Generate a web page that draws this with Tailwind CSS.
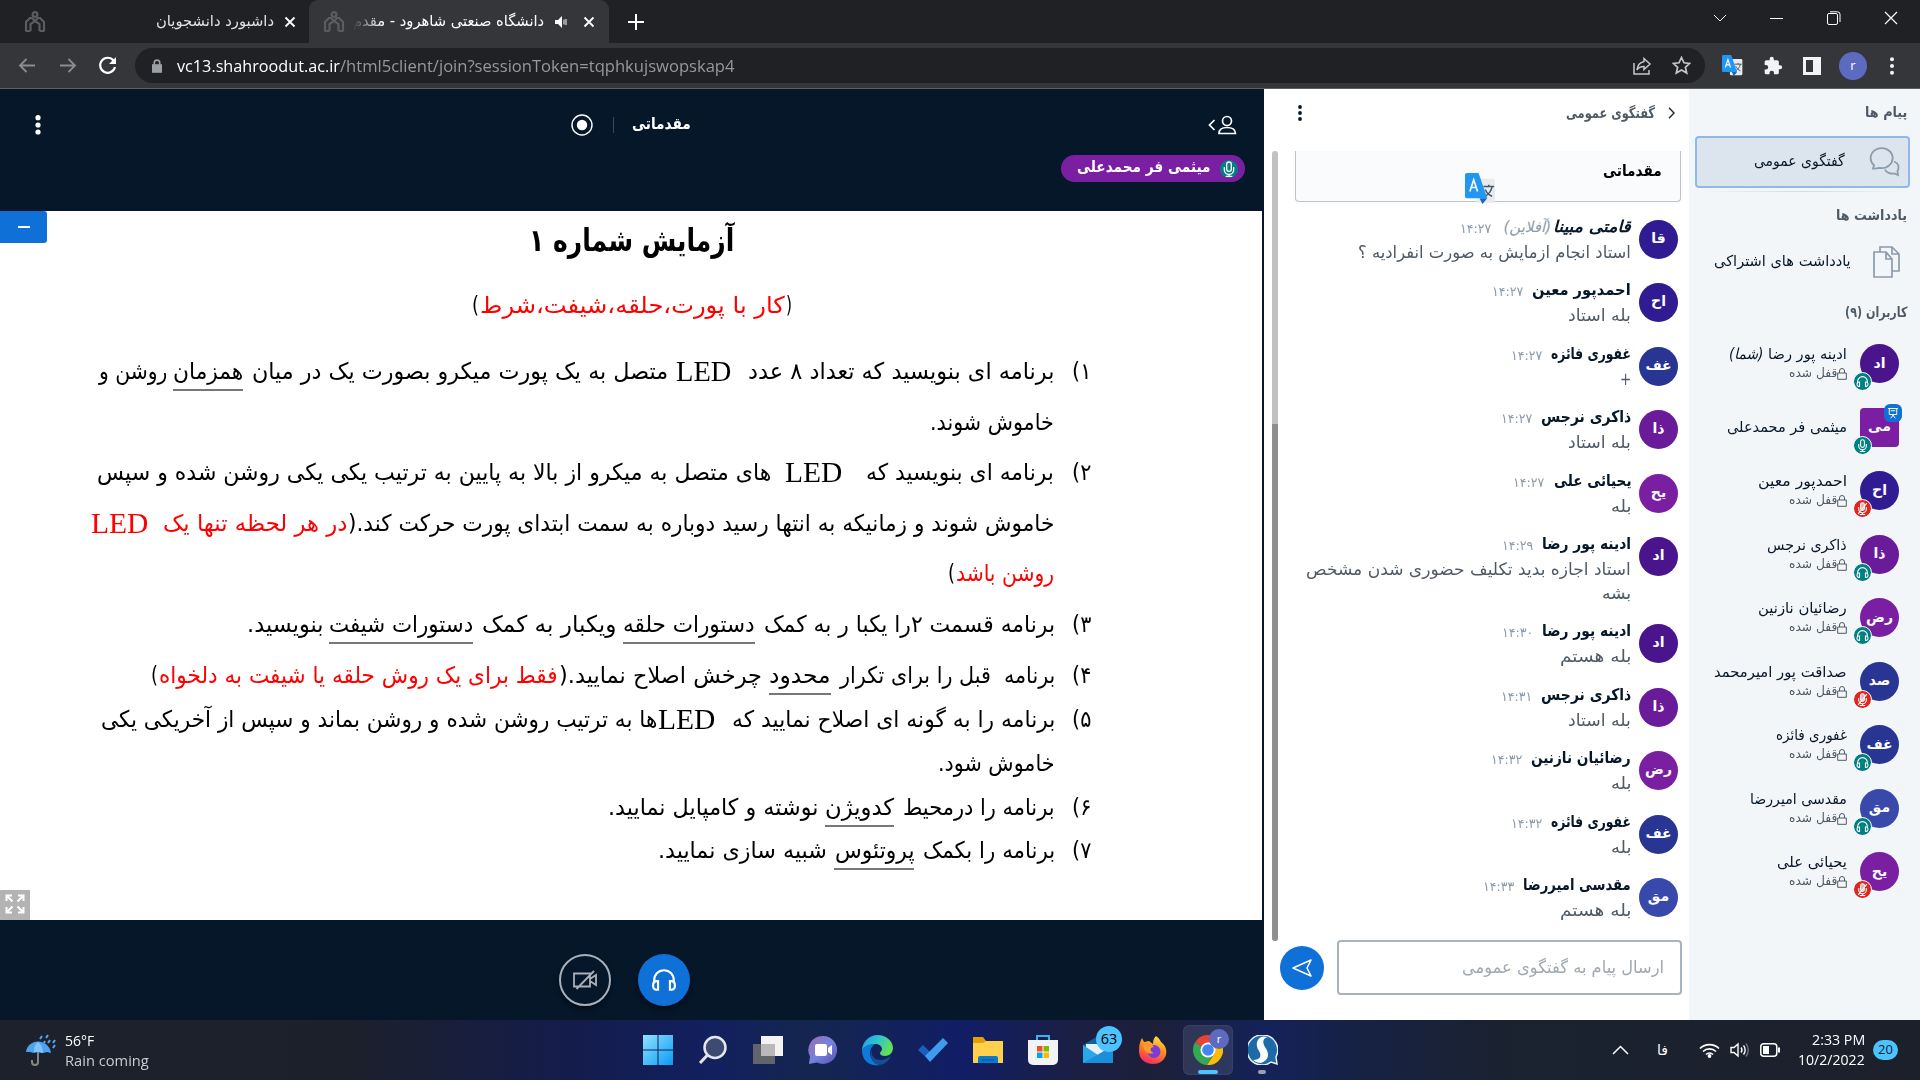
<!DOCTYPE html>
<html lang="fa">
<head>
<meta charset="utf-8">
<title>دانشگاه صنعتی شاهرود - مقدماتی</title>
<script src="https://cdn.jsdelivr.net/npm/@tailwindcss/browser@4"></script>
</head>
<body class="w-[1920px] h-[1080px] overflow-hidden bg-[#06172A] font-['DejaVu_Sans',sans-serif]">
<svg class="hidden">
  <symbol id="uni" viewBox="0 0 22 22"><g fill="none" stroke="#5b5c5f" stroke-width="2.200"><path d="M2 20v-9l4-4M20 20v-9l-4-4M6.500 20v-7l4.500-3 4.500 3v7M1.500 20h5M15.500 20h5M5 7h3l3 3 3-3h3"/><circle cx="11" cy="3.500" r="2.400"/></g></symbol>
  <symbol id="x" viewBox="0 0 12 12"><path d="M1.500 1.500l9 9M10.500 1.500l-9 9" stroke="currentColor" stroke-width="1.800" fill="none"/></symbol>
  <symbol id="tr" viewBox="0 0 32 32"><rect x="12" y="6" width="19" height="25" rx="2" fill="#e8eaed"/><path d="M19 14h11M24.500 12v2M28 14c-1 5-4 8-7 10M21 17c1 3 4 6 7 7" stroke="#455a64" stroke-width="1.500" fill="none"/><path d="M15 26h8l-5 6z" fill="#1565c0"/><path d="M2 0h12l9 26H2a2 2 0 0 1-2-2V2a2 2 0 0 1 2-2z" fill="#2196f3"/><path d="M5 19l4-12 4 12M6.500 15h5" stroke="#fff" stroke-width="1.700" fill="none"/></symbol>
  <symbol id="head" viewBox="0 0 24 24"><path d="M3 15v-3a9 9 0 0 1 18 0v3" fill="none" stroke="currentColor" stroke-width="2"/><path d="M6.500 13v8H5a3 3 0 0 1-3-3v-2a3 3 0 0 1 3-3zM17.500 13v8H19a3 3 0 0 0 3-3v-2a3 3 0 0 0-3-3z" fill="none" stroke="currentColor" stroke-width="2"/></symbol>
  <symbol id="mic" viewBox="0 0 24 24"><g fill="none" stroke="currentColor" stroke-width="2"><rect x="8.500" y="1.500" width="7" height="14" rx="3.500"/><path d="M5 9v4a7 7 0 0 0 14 0V9M12 20v3M7 23h10"/></g></symbol>
  <symbol id="mute" viewBox="0 0 24 24"><g fill="none" stroke="currentColor" stroke-width="2"><rect x="8.500" y="1.500" width="7" height="14" rx="3.500" fill="currentColor" fill-opacity=".6"/><path d="M5 9v4a7 7 0 0 0 14 0V9M12 20v3M7 23h10M4 22L20 2"/></g></symbol>
  <symbol id="lock" viewBox="0 0 10 12"><path d="M.7 5h8.600v6.300H.7zM2.500 5V3a2.500 2.500 0 0 1 5 0v2" fill="none" stroke="currentColor" stroke-width="1"/></symbol>
  <symbol id="pres" viewBox="0 0 16 16"><g fill="none" stroke="#fff" stroke-width="1.300"><path d="M1.500 2h13M3 2v8h10V2M5 5h6M8 10v2M5 15l3-4 3 4"/></g></symbol>
</svg>

<div class="w-[1920px] h-[1080px] flex flex-col">
  <!-- tab strip -->
  <header class="h-[43px] bg-[#202124] flex items-stretch text-white">
    <div class="w-[309px] flex items-center pl-6 pr-[13px]">
      <svg class="size-[22px]"><use href="#uni"/></svg>
      <div class="ml-auto flex items-center gap-[10px]">
        <span dir="rtl" data-w="118" class="text-[15px] text-[#dfe1e5]">داشبورد دانشجویان</span>
        <svg class="size-3 "><use href="#x"/></svg>
      </div>
    </div>
    <div class="w-[300px] bg-[#35363a] rounded-t-[9px] flex items-center pl-[14px] pr-[14px]">
      <svg class="size-[22px]"><use href="#uni"/></svg>
      <div class="ml-[8px] w-[192px] overflow-hidden flex flex-row mask-l-from-85% mask-l-to-100%">
        <span dir="rtl" data-w="191" class="text-[15px]">دانشگاه صنعتی شاهرود - مقدم</span>
      </div>
      <svg class="ml-[9px] size-[14px]" viewBox="0 0 14 14"><path d="M1 5h3l4-4v12L4 9H1z" fill="#fff"/><path d="M10 4.500v5M12 4v6" stroke="#fff" stroke-width="1"/></svg>
      <svg class="ml-auto size-3"><use href="#x"/></svg>
    </div>
    <div class="flex items-center pl-[19px]"><svg class="size-4" viewBox="0 0 16 16"><path d="M8 0v16M0 8h16" stroke="#fff" stroke-width="2"/></svg></div>
    <div class="ml-auto flex pt-[11px] gap-[43px] pr-[22px]">
      <svg class="size-[14px]" viewBox="0 0 14 14"><path d="M1 4l6 6 6-6" stroke="#fff" fill="none"/></svg>
      <svg class="size-[14px]" viewBox="0 0 14 14"><path d="M0 7.500h13" stroke="#fff"/></svg>
      <svg class="size-[14px]" viewBox="0 0 14 14"><g fill="none" stroke="#fff"><rect x=".5" y="2.500" width="10" height="11" rx="1.500"/><path d="M3 .8h7.500a2.500 2.500 0 0 1 2.500 2.500V11"/></g></svg>
      <svg class="size-[14px]" viewBox="0 0 14 14"><path d="M1 1l12 12M13 1L1 13" stroke="#fff" stroke-width="1.200"/></svg>
    </div>
  </header>
  <!-- address bar -->
  <div class="h-[46px] bg-[#35363a] border-b border-[#5c5e61] flex items-center text-white">
    <div class="w-[135px] flex items-center pl-[18px] gap-[22px]">
      <svg class="size-[19px]" viewBox="0 0 19 19"><path d="M17 9.500H2M8.500 3L2 9.500 8.500 16" stroke="#8b8c8f" stroke-width="1.800" fill="none"/></svg>
      <svg class="size-[19px]" viewBox="0 0 19 19"><path d="M1 9.500h15M9.500 3L16 9.500 9.500 16" stroke="#8b8c8f" stroke-width="1.800" fill="none"/></svg>
      <svg class="-ml-[2px] size-[19px]" viewBox="0 0 19 19"><path d="M15.500 4.500a7.500 7.500 0 1 0 1.500 6.500" stroke="#fff" stroke-width="2.200" fill="none"/><path d="M18 1v7h-7z" fill="#fff"/></svg>
    </div>
    <div class="w-[1570px] h-[35px] rounded-full bg-[#202124] flex items-center pl-[17px] pr-[14px]">
      <svg class="w-[10px] h-[14px]" viewBox="0 0 11 15"><path d="M0 5.500h11V15H0z" fill="#9aa0a6"/><path d="M2.500 6V4a3 3 0 0 1 6 0v2" fill="none" stroke="#9aa0a6" stroke-width="1.800"/></svg>
      <div class="ml-[15px] flex font-['Open_Sans',sans-serif] text-[17px] leading-[26px]">
        <span data-w="163">vc13.shahroodut.ac.ir</span><span data-w="394" class="text-[#95989c]">/html5client/join?sessionToken=tqphkujswopskap4</span>
      </div>
      <svg class="ml-auto size-[20px]" viewBox="0 0 20 20"><g fill="none" stroke="#c4c7ca" stroke-width="1.500"><path d="M2 7v11h15v-4"/><path d="M12 2.500l6 5.500-6 5.500v-3c-3 0-5.500.8-7 3.500.4-4 2.500-7.500 7-8.500z"/></g></svg>
      <svg class="ml-[20px] size-[19px]" viewBox="0 0 19 19"><path d="M9.500 1.500l2.500 5.300 5.700.6-4.300 3.900 1.300 5.700-5.200-3-5.200 3 1.300-5.700L1.300 7.400 7 6.800z" fill="none" stroke="#c4c7ca" stroke-width="1.700"/></svg>
    </div>
    <div class="flex items-center pl-[17px]">
      <svg class="size-[21px]"><use href="#tr"/></svg>
      <svg class="ml-[20px] size-[20px]" viewBox="0 0 24 24"><path d="M20.500 11H19V7a2 2 0 0 0-2-2h-4V3.500a2.500 2.500 0 0 0-5 0V5H4a2 2 0 0 0-2 2v3.800h1.500a2.700 2.700 0 0 1 0 5.400H2V20a2 2 0 0 0 2 2h3.800v-1.500a2.700 2.700 0 0 1 5.400 0V22H17a2 2 0 0 0 2-2v-4h1.500a2.500 2.500 0 0 0 0-5z" fill="#f1f3f4"/></svg>
      <svg class="ml-[20px] size-[18px]" viewBox="0 0 18 18"><path d="M0 0h18v18H0z" fill="#f1f3f4"/><path d="M3 3h7v12H3z" fill="#35363a"/></svg>
      <div class="ml-[18px] size-7 rounded-full bg-[#5c6bc0] flex items-center justify-center text-[13px] font-['Open_Sans',sans-serif]">r</div>
      <svg class="ml-[23px] w-1 h-[18px]" viewBox="0 0 4 18"><g fill="#f1f3f4"><circle cx="2" cy="2.200" r="2"/><circle cx="2" cy="9" r="2"/><circle cx="2" cy="15.800" r="2"/></g></svg>
    </div>
  </div>

  <main class="h-[931px] flex">
    <!-- presentation -->
    <section class="w-[1264px] flex flex-col">
      <div class="h-[122px] text-white flex flex-col">
        <div class="h-[66px] pt-[6px] flex items-center pl-[35px] pr-[27px]">
          <svg class="w-[6px] h-5" viewBox="0 0 6 20"><g fill="#fff"><circle cx="3" cy="2.700" r="2.600"/><circle cx="3" cy="10" r="2.600"/><circle cx="3" cy="17" r="2.600"/></g></svg>
          <svg class="ml-[530px] size-[22px]" viewBox="0 0 22 22"><circle cx="11" cy="11" r="10" fill="none" stroke="#fff" stroke-width="1.400"/><circle cx="11" cy="11" r="5.200" fill="#fff"/></svg>
          <div class="ml-[20px] w-px h-4 bg-[#3c4a59]"></div>
          <span dir="rtl" data-w="59" class="ml-[18px] -mt-[2px] text-[16px] leading-[22px] font-bold">مقدماتی</span>
          <svg class="ml-auto w-[29px] h-5" viewBox="0 0 29 20"><g fill="none" stroke="#fff" stroke-width="1.700"><path d="M6.500 5l-5 5 5 5"/><circle cx="19" cy="6" r="4.500"/><path d="M11 18.500c0-4 3-6 8-6s8.500 2 8.500 6z"/></g></svg>
        </div>
        <div class="ml-[1061px] w-[184px] h-[27px] rounded-full bg-[#7B1FA2] flex items-center pl-4 pr-[7px]">
          <span dir="rtl" data-w="134" class="-mt-1 text-[16px] leading-[20px] font-bold">میثمی فر محمدعلی</span>
          <div class="ml-auto w-[18px] h-[18px] rounded-full bg-[#008081] flex items-center justify-center"><svg class="size-4"><use href="#mic"/></svg></div>
        </div>
      </div>
      <div class="relative w-[1262px] h-[709px] bg-white text-black">
        <div id="slide" dir="rtl" class="flex flex-col"></div>
        <div class="absolute left-0 top-0 w-[47px] h-8 rounded-r-[3px] bg-[#0F70D7] flex items-center justify-center"><div class="w-3 h-[1.500px] bg-white"></div></div>
        <div class="absolute left-0 bottom-0 size-[30px] bg-[#b3b3b3] flex items-center justify-center pb-[3px]">
          <svg class="size-5" viewBox="0 0 20 20"><path d="M7.500 7.500L2 2M12.500 7.500L18 2M7.500 12.500L2 18M12.500 12.500L18 18M1.500 7V1.500H7M13 1.500h5.500V7M1.500 13v5.500H7M13 18.500h5.500V13" fill="none" stroke="#fff" stroke-width="2"/></svg>
        </div>
      </div>
      <div class="h-[100px] pt-[34px] pl-[559px] flex gap-[27px]">
        <div class="size-[52px] rounded-full border-[2.500px] border-[#a9b0b8] shadow-md shadow-black/40 flex items-center justify-center text-[#a9b0b8]">
          <svg class="w-6 h-5" viewBox="0 0 24 20"><g fill="none" stroke="currentColor" stroke-width="1.800"><path d="M1 3.500h16v13H1zM17 9l6-4v10l-6-4zM3.500 19L21 1"/></g></svg>
        </div>
        <div class="size-[52px] rounded-full bg-[#0F70D7] shadow-md shadow-black/40 flex items-center justify-center text-white"><svg class="size-[26px]"><use href="#head"/></svg></div>
      </div>
    </section>

    <!-- chat -->
    <section dir="rtl" class="w-[425px] bg-white flex flex-col">
      <div class="h-[62px] pb-[14px] flex items-center pr-[14px] pl-[34px]">
        <svg class="w-[7px] h-3 shrink-0" viewBox="0 0 7 12"><path d="M1 .8L6 6 1 11.200" fill="none" stroke="#1b2a3a" stroke-width="1.400"/></svg>
        <span data-w="89" class="mr-[13px] text-[14.500px] leading-5 text-[#4E5A66] font-bold">گفتگوی عمومی</span>
        <svg class="mr-auto w-1 h-4" viewBox="0 0 4 16"><g fill="#06172A"><circle cx="2" cy="2" r="1.900"/><circle cx="2" cy="8" r="1.900"/><circle cx="2" cy="14" r="1.900"/></g></svg>
      </div>
      <div class="h-[789px] flex">
        <div class="w-[409px] pr-2 flex flex-col">
          <div class="relative w-[386px] h-[51px] border border-t-0 border-[#bac4cd] rounded-b bg-[#f9fbfc] pr-[18px] pt-[9px]">
            <span data-w="59" class="text-[16px] leading-[22px] font-bold">مقدماتی</span>
            <svg class="absolute left-[169px] top-[22px] size-[31px]"><use href="#tr"/></svg>
          </div>
          <div id="chat" class="mt-[13px] flex flex-col"></div>
        </div>
        <div class="mr-[2px] w-[6px] h-[790px] rounded-full bg-[#c1c1c1] flex flex-col justify-end"><div class="h-[517px] rounded-b-full bg-[#8f8f8f]"></div></div>
      </div>
      <div class="flex pr-[7px] items-center">
        <div class="w-[345px] h-[55px] border-[2.500px] border-[#a7b3bd] rounded-[4px] flex items-center pr-[16px]">
          <span data-w="202" class="text-[17px] leading-6 text-[#9fa8b1] -mt-[2px]">ارسال پیام به گفتگوی عمومی</span>
        </div>
        <div class="mr-[13px] size-[44px] rounded-full bg-[#0F70D7] flex items-center justify-center">
          <svg class="w-5 h-[18px]" viewBox="0 0 20 18"><path d="M1 9L19 1l-4 8 4 8z" fill="none" stroke="#fff" stroke-width="1.500" stroke-linejoin="round"/></svg>
        </div>
      </div>
    </section>

    <!-- users -->
    <aside dir="rtl" class="w-[231px] bg-[#F3F6F9] flex flex-col text-[15px] leading-5">
      <div class="h-[47px] pt-[13px] pr-[13px]"><span data-w="42" class="text-[14px] leading-5 font-bold text-[#4E5A66]">پیام ها</span></div>
      <div class="mr-[10px] w-[215px] h-[52px] border-[2.500px] border-[#8fb9ea] rounded-[4px] bg-[#DCE4ED] flex items-center pr-[7px]">
        <svg class="w-8 h-[30px] text-[#8b9cad]" viewBox="0 0 32 30"><g fill="none" stroke="currentColor" stroke-width="1.800"><path d="M4 21.500l1-3.200A11 10 0 1 1 11 21c-2 .2-4 .8-7 .5z"/><path d="M25 14.500c4 1.500 6 5 3.500 9.500l.5 4-3.500-1.500c-4 .8-8.500-1-9.500-4"/></g></svg>
        <span data-w="91" class="mr-[24px] text-[#06172A] -mt-[2px]">گفتگوی عمومی</span>
      </div>
      <div class="mt-[3px] h-px mx-3 bg-gradient-to-r from-transparent via-[#d4dbe2] to-transparent"></div>
      <div class="mt-[13px] pr-[13px]"><span data-w="71" class="text-[14px] leading-5 font-bold text-[#4E5A66]">یادداشت ها</span></div>
      <div class="mt-[21px] pr-[20px] h-8 flex items-center">
        <svg class="w-[27px] h-8 text-[#8b9cad]" viewBox="0 0 27 32"><g fill="none" stroke="currentColor" stroke-width="1.700"><path d="M1 6h12l6 7v18H1zM13 6v7h6"/><path d="M7 6V1h12l7 7v17h-7M19 1v7h7"/></g></svg>
        <span data-w="137" class="mr-[22px] text-[#06172A] -mt-[2px]">یادداشت های اشتراکی</span>
      </div>
      <div class="mt-[24px] pr-[13px]"><span data-w="62" class="text-[14px] leading-5 font-bold text-[#4E5A66]">کاربران (۹)</span></div>
      <div id="users" class="mt-[22px] flex flex-col"></div>
    </aside>
  </main>

  <!-- taskbar -->
  <footer class="h-[60px] flex items-center text-white font-['Open_Sans',sans-serif] bg-[linear-gradient(90deg,#1d212b_0%,#1c202b_18%,#141c4c_30%,#12205f_37%,#14264f_42%,#111e66_50%,#1b1f44_56%,#1c1f38_60%,#14225a_66%,#172143_71%,#1a2230_78%,#1c202b_100%)]">
    <div class="w-[633px] pl-[25px] flex items-center">
      <svg class="w-[31px] h-8" viewBox="0 0 31 32"><path d="M13 8v20a3 3 0 0 1-6 0v-2" fill="none" stroke="#8a8583" stroke-width="2"/><path d="M1 18C2 11 7 8 13 7.500 20 8 25 12 26 19l-4-1-4 1-5-1-4 1-4-1z" fill="#4da3ee"/><path d="M9 18c0-5 1-8 4-10 3 2 5 6 5 11l-5-1z" fill="#7cc4fb"/><path d="M17 2l-2 3M23 1l-2 3M25 6l-2 3M30 6l-2 3M30 11l-2 3M20 7l-1 2" stroke="#54a9f5" stroke-width="2"/></svg>
      <div class="ml-[9px] pt-px flex flex-col text-[14.500px] leading-5">
        <span data-w="29">56°F</span><span data-w="84" class="text-[#c9cbd0]">Rain coming</span>
      </div>
    </div>
    <div class="w-[660px] h-[60px] flex items-center">
      <div class="w-[55px] h-[50px] flex justify-center items-center ml-[-3px]"><svg class="size-[30px]" viewBox="0 0 30 30"><defs><linearGradient id="w" x1="0" y1="0" x2="1" y2="1"><stop offset="0" stop-color="#8fe3ff"/><stop offset="1" stop-color="#0a9af5"/></linearGradient></defs><path d="M0 0h14.500v14.500H0zM15.500 0H30v14.500H15.500zM0 15.500h14.500V30H0zM15.500 15.500H30V30H15.500z" fill="url(#w)"/></svg></div>
      <div class="w-[55px] flex justify-center"><svg class="size-[30px]" viewBox="0 0 30 30"><circle cx="17" cy="12.500" r="10.500" fill="#3c4a74" stroke="#e6e7ea" stroke-width="2.500"/><path d="M9.500 20L2 28" stroke="#e0e2e6" stroke-width="3"/></svg></div>
      <div class="w-[55px] flex justify-center"><svg class="size-[30px]" viewBox="0 0 30 30"><path d="M8 1h22v20H8z" fill="#f3f3f3"/><path d="M0 9h22v20H0z" fill="#707070" fill-opacity=".85"/><path d="M8 9h14v12H8z" fill="#b9b9b9"/></svg></div>
      <div class="w-[55px] flex justify-center"><svg class="size-[30px]" viewBox="0 0 30 30"><defs><linearGradient id="t" x1="0" y1="0" x2="1" y2="1"><stop offset="0" stop-color="#9a6bb0"/><stop offset=".5" stop-color="#7683dd"/><stop offset="1" stop-color="#5a50b4"/></linearGradient></defs><path d="M15 1a14 14 0 1 1-6 26.600L1 29l1-7.500A14 14 0 0 1 15 1z" fill="url(#t)"/><rect x="7" y="9" width="12" height="12" rx="2" fill="#fff"/><path d="M20 13l4-3v10l-4-3z" fill="#fff"/></svg></div>
      <div class="w-[55px] flex justify-center"><svg class="size-[31px]" viewBox="0 0 31 31"><defs><linearGradient id="e" x1="0" y1="0" x2="1" y2=".4"><stop offset="0" stop-color="#1f9be0"/><stop offset=".5" stop-color="#2cc3d2"/><stop offset="1" stop-color="#62e05a"/></linearGradient></defs><path d="M15.500 0C24 0 31 6 31 13c0 5-4 8-8 8-3 0-5-1-5-3 0-1 2-2 2-4 0-3-3-5-7-5C6 9 1 13 0 16 0 7 7 0 15.500 0z" fill="url(#e)"/><path d="M0 16C1 12 6 8.500 13 9c-3 2-5 5-5 9 0 6 5 10 10 12C9 32 0 26 0 16z" fill="#0f7ad8"/><path d="M12 11c-5 5-2 14 6 14 5 0 8-2 11-4-2 5-7 9-12 9C9 29 6 18 12 11z" fill="#124f96"/></svg></div>
      <div class="w-[55px] flex justify-center"><svg class="size-[30px]" viewBox="0 0 30 30"><path d="M0 15l5-5 8 8-1 8z" fill="#1b5fbd"/><path d="M7 21L25 3l5 5-18 19z" fill="#3f9bf0"/></svg></div>
      <div class="w-[55px] flex justify-center"><svg class="size-[30px]" viewBox="0 0 30 30"><path d="M0 2h10l3 4h17v22H0z" fill="#e0a106"/><path d="M0 8h10l3-2h17v22H0z" fill="#ffd04b"/><path d="M5 28v-5a2 2 0 0 1 2-2h16a2 2 0 0 1 2 2v5z" fill="#0b79cf"/><path d="M9 25h12" stroke="#07518f"/></svg></div>
      <div class="w-[55px] flex justify-center"><svg class="size-[30px]" viewBox="0 0 30 30"><path d="M9 5V1h12v4" fill="none" stroke="#35b4f0" stroke-width="2"/><path d="M0 5h30v20a5 5 0 0 1-5 5H5a5 5 0 0 1-5-5z" fill="#f2f3f5"/><path d="M9 11h5.500v5.500H9z" fill="#f25022"/><path d="M15.500 11H21v5.500h-5.500z" fill="#7fba00"/><path d="M9 17.500h5.500V23H9z" fill="#00a4ef"/><path d="M15.500 17.500H21V23h-5.500z" fill="#ffb900"/></svg></div>
      <div class="relative w-[55px] flex justify-center"><svg class="size-[30px]" viewBox="0 0 30 30"><path d="M0 10L15 1l15 9v18H0z" fill="#0f5ea8"/><path d="M3 9h24v8l-12 6L3 16z" fill="#e9eff5"/><path d="M0 10l15 10L30 10v18H0z" fill="#28a8ea"/><path d="M0 28L30 11v17z" fill="#1b8fdc"/></svg><div class="absolute left-[26px] -top-[9px] size-[26px] rounded-full bg-[#4cc2ff] text-[14.500px] text-black flex items-center justify-center">63</div></div>
      <div class="w-[55px] flex justify-center"><svg class="size-[30px]" viewBox="0 0 30 30"><defs><linearGradient id="f" x1=".7" y1="0" x2=".3" y2="1"><stop offset="0" stop-color="#ffe24a"/><stop offset=".45" stop-color="#ff8a1d"/><stop offset="1" stop-color="#f0246c"/></linearGradient></defs><path d="M18 1c3 2 4 4 5 6 5 4 6 8 5 13-2 6-7 9-13 9C7 29 1 24 1 16 1 10 2 7 4 3l2 4 5-1 4 3c0-4 1-6 3-8z" fill="url(#f)"/><circle cx="16" cy="16.500" r="6.500" fill="#7a3bd8"/><path d="M5 10c4-2 9-1 11 2-5 0-4 5 0 6-6 2-10-1-11-8z" fill="#ff9b26"/></svg></div>
      <div class="relative w-[55px] flex justify-center"><div class="w-[50px] h-[50px] rounded-md bg-white/10 border border-white/5 flex justify-center pt-[9px]"><svg class="size-[30px]" viewBox="0 0 30 30"><path d="M15 15L2 7.500A15 15 0 0 1 28 7.500z" fill="#ea4335"/><path d="M2 7.500A15 15 0 0 0 14 30l7-11.500-6-3.500z" fill="#34a853"/><path d="M28 7.500A15 15 0 0 1 14 30l7.500-11.500L15 7.500z" fill="#fbbc05"/><circle cx="15" cy="15" r="7.500" fill="#fff"/><circle cx="15" cy="15" r="5.800" fill="#4285f4"/></svg></div><div class="absolute left-[29px] top-[4px] size-5 rounded-full bg-[#5c6bc0] text-[11px] flex items-center justify-center">r</div><div class="absolute left-[18px] top-[45px] w-5 h-1 rounded-full bg-[#4cc2ff]"></div></div>
      <div class="relative w-[55px] flex justify-center"><svg class="size-[30px]" viewBox="0 0 30 30"><path d="M15 0a15 15 0 0 1 13 22l1 7-6-2A15 15 0 1 1 15 0z" fill="#1c6aa8" stroke="#e9eef3" stroke-width="1.500"/><path d="M20 2c-5 1-6 5-3 10 5 7 4 13-4 16-3 0-6-1-8-3 7 0 9-4 6-9C6 9 10 2 15 1.500z" fill="#f8fafc"/></svg><div class="absolute left-[23px] top-[35px] w-2 h-1 rounded-full bg-[#9a9fb2]"></div></div>
    </div>
    <div class="ml-auto flex items-center pr-[22px]">
      <svg class="w-[17px] h-[10px]" viewBox="0 0 17 10"><path d="M1 9l7.500-7.500L16 9" fill="none" stroke="#fff" stroke-width="1.500"/></svg>
      <span dir="rtl" data-w="11" class="ml-[28px] text-[14px] font-['DejaVu_Sans',sans-serif]">فا</span>
      <svg class="ml-[31px] w-[21px] h-4" viewBox="0 0 21 16"><g fill="none" stroke="#fff" stroke-width="1.700"><path d="M1 6.500a13.500 13.500 0 0 1 19 0M4 9.500a9.300 9.300 0 0 1 13 0M7 12.500a5 5 0 0 1 7 0"/></g><circle cx="10.500" cy="14" r="1.900" fill="#fff"/></svg>
      <svg class="ml-[10px] w-5 h-4" viewBox="0 0 20 16"><g fill="none" stroke="#fff" stroke-width="1.400"><path d="M1 5.500h3L8 2v12l-4-3.500H1zM11 5.500c1.200 1.500 1.200 3.500 0 5M13.500 3.500c2.200 2.500 2.200 6.500 0 9"/><path d="M16 1.500c3 3.500 3 9.500 0 13" stroke="#6d717b"/></g></svg>
      <svg class="ml-[10px] w-5 h-[14px]" viewBox="0 0 20 14"><rect x=".8" y=".8" width="16" height="12.400" rx="3" fill="none" stroke="#fff" stroke-width="1.500"/><path d="M3 3h6v8H3zM18 4.500h2v5h-2z" fill="#fff"/></svg>
      <div class="ml-[18px] w-[67px] flex flex-col items-end text-[14.500px] leading-5"><span data-w="53">2:33 PM</span><span data-w="67">10/2/2022</span></div>
      <div class="ml-[8px] w-[25px] h-5 rounded-full bg-[#4cc2ff] text-[13px] text-[#14202e] flex items-center justify-center">20</div>
    </div>
  </footer>
</div>

<script>
// Slide lines: height, number, then segments of [text, left, right, kind]
var LINES = [
  [65, '', [['آزمایش شماره ۱', 529, 734, 't']]],
  [66, '', [['(', 786, 792, ''], ['کار با پورت،حلقه،شیفت،شرط', 480, 785, 'r'], [')', 472, 479, '']]],
  [51, '۱)', [['برنامه ای بنویسید که تعداد ۸ عدد', 748, 1054, ''], ['LED', 676, 731, 'l'], ['متصل به یک پورت میکرو بصورت یک در میان', 252, 668, ''], ['همزمان', 173, 243, 'u'], ['روشن و', 99, 167, '']]],
  [50, '', [['خاموش شوند.', 930, 1054, '']]],
  [51, '۲)', [['برنامه ای بنویسید که', 866, 1054, ''], ['LED', 785, 842, 'l'], ['های متصل به میکرو از بالا به پایین به ترتیب یکی یکی روشن شده و سپس', 97, 771, '']]],
  [50, '', [['خاموش شوند و زمانیکه به انتها رسید دوباره به سمت ابتدای پورت حرکت کند.(', 348, 1054, ''], ['در هر لحظه تنها یک', 163, 347, 'r'], ['LED', 91, 148, 'lr']]],
  [51, '', [['روشن باشد', 956, 1054, 'r'], [')', 948, 955, '']]],
  [51, '۳)', [['برنامه قسمت ۲را یکبا ر به کمک', 764, 1055, ''], ['دستورات حلقه', 623, 755, 'u'], ['ویکبار به کمک', 482, 616, ''], ['دستورات شیفت', 329, 473, 'u'], ['بنویسید.', 247, 323, '']]],
  [44, '۴)', [['برنامه\u00a0 قبل را برای تکرار', 840, 1055, ''], ['محدود', 769, 831, 'u'], ['چرخش اصلاح نمایید.(', 559, 762, ''], ['فقط برای یک روش حلقه یا شیفت به دلخواه', 159, 558, 'r'], [')', 151, 158, '']]],
  [44, '۵)', [['برنامه را به گونه ای اصلاح نمایید که', 732, 1055, ''], ['LED', 658, 715, 'l'], ['ها به ترتیب روشن شده و روشن بماند و سپس از آخریکی یکی', 101, 657, '']]],
  [44, '', [['خاموش شود.', 938, 1055, '']]],
  [43, '۶)', [['برنامه را درمحیط', 903, 1055, ''], ['کدویژن', 825, 894, 'u'], ['نوشته و کامپایل نمایید.', 608, 818, '']]],
  [43, '۷)', [['برنامه را بکمک', 923, 1055, ''], ['پروتئوس', 834, 914, 'u'], ['شبیه سازی نمایید.', 658, 827, '']]]
];
var KIND = {
  '': 'text-[23px] h-[42px]',
  t: 'text-[31px] font-bold h-[42px]',
  r: 'text-[23px] text-[#ff0000] h-[42px]',
  u: 'text-[23px] border-b-2 border-[#777] h-[40px]',
  l: "text-[30px] font-['Liberation_Serif',serif] h-[42px]",
  lr: "text-[30px] font-['Liberation_Serif',serif] text-[#ff0000] h-[42px]"
};
document.getElementById('slide').innerHTML = '<div class="h-[9px]"></div>' + LINES.map(function (l) {
  var edge = 1262, out = '';
  var segs = (l[1] ? [[l[1], 1072, 1091, '']] : []).concat(l[2]);
  segs.forEach(function (s) {
    out += '<span data-w="' + (s[2] - s[1]) + '" class="leading-[40px] ' + KIND[s[3]] + '" style="margin-right:' + (edge - s[2]) + 'px">' + s[0] + '</span>';
    edge = s[1];
  });
  return '<div class="flex" style="height:' + l[0] + 'px">' + out + '</div>';
}).join('');

var COLOR = {'قا': '#311B92', 'اح': '#311B92', 'غف': '#283593', 'ذا': '#6A1B9A', 'یح': '#7B1FA2', 'اد': '#4A148C', 'رض': '#7B1FA2', 'مق': '#3949AB', 'صد': '#283593', 'می': '#7B1FA2'};
// Chat rows: initials, name, name width, time, messages with widths
var CHAT = [
  ['قا', 'قامتی مبینا', 78, '۱۴:۲۷', [['استاد انجام ازمایش به صورت انفرادیه ؟', 273]]],
  ['اح', 'احمدپور معین', 99, '۱۴:۲۷', [['بله استاد', 63]]],
  ['غف', 'غفوری فائزه', 80, '۱۴:۲۷', [['+', 11]]],
  ['ذا', 'ذاکری نرجس', 90, '۱۴:۲۷', [['بله استاد', 63]]],
  ['یح', 'یحیائی علی', 78, '۱۴:۲۷', [['بله', 20]]],
  ['اد', 'ادینه پور رضا', 89, '۱۴:۲۹', [['استاد اجازه بدید تکلیف حضوری شدن مشخص', 325], ['بشه', 29]]],
  ['اد', 'ادینه پور رضا', 89, '۱۴:۳۰', [['بله هستم', 71]]],
  ['ذا', 'ذاکری نرجس', 90, '۱۴:۳۱', [['بله استاد', 63]]],
  ['رض', 'رضائیان نازنین', 100, '۱۴:۳۲', [['بله', 20]]],
  ['غف', 'غفوری فائزه', 80, '۱۴:۳۲', [['بله', 20]]],
  ['مق', 'مقدسی امیررضا', 108, '۱۴:۳۳', [['بله هستم', 71]]]
];
document.getElementById('chat').innerHTML = CHAT.map(function (c, i) {
  return '<div class="flex ' + (c[4].length > 1 ? 'h-[87.400px]' : 'h-[63.400px]') + ' pr-[3px]">' +
    '<div class="mt-[5px] size-[39px] rounded-full flex items-center justify-center text-white text-[14px] font-bold pb-[2px]" style="background:' + COLOR[c[0]] + '">' + c[0] + '</div>' +
    '<div class="mr-[8px] flex flex-col">' +
    '<div class="flex items-center h-6"><span data-w="' + c[2] + '" class="text-[16px] leading-6 font-bold text-[#06172A]' + (i ? '' : ' italic') + '">' + c[1] + '</span>' +
    (i ? '' : '<span data-w="48" class="mr-[2px] text-[15px] leading-6 italic text-[#8b9aa8]">(آفلاین)</span>') +
    '<span data-w="31" class="' + (i ? 'mr-[9px]' : 'mr-3') + ' mt-1 text-[13px] leading-5 text-[#8b9aa8]">' + c[3] + '</span></div>' +
    c[4].map(function (m) { return '<span data-w="' + m[1] + '" class="h-6 text-[17px] leading-[26px] text-[#4E5A66]">' + m[0] + '</span>'; }).join('') +
    '</div></div>';
}).join('');

// Users: initials, name, name width, status icon
var USERS = [
  ['اد', 'ادینه پور رضا', 79, 'head'], ['می', 'میثمی فر محمدعلی', 120, 'mic'], ['اح', 'احمدپور معین', 89, 'mute'],
  ['ذا', 'ذاکری نرجس', 80, 'head'], ['رض', 'رضائیان نازنین', 89, 'head'], ['صد', 'صداقت پور امیرمحمد', 133, 'mute'],
  ['غف', 'غفوری فائزه', 71, 'head'], ['مق', 'مقدسی امیررضا', 97, 'head'], ['یح', 'یحیائی علی', 70, 'mute']
];
document.getElementById('users').innerHTML = USERS.map(function (u, i) {
  return '<div class="h-[63.500px] flex pr-[21px]">' +
    '<div class="relative size-[39px] flex items-center justify-center text-white text-[14px] font-bold pb-[2px] ' + (i === 1 ? 'rounded-[4px]' : 'rounded-full') + '" style="background:' + COLOR[u[0]] + '">' + u[0] +
    '<div class="absolute left-[-7px] top-[28px] size-[19px] rounded-full border border-white flex items-center justify-center text-white ' + (u[3] === 'mute' ? 'bg-[#DF2721]' : 'bg-[#008081]') + '"><svg class="size-[13px]"><use href="#' + u[3] + '"/></svg></div>' +
    (i === 1 ? '<div class="absolute left-[24px] top-[-4px] size-[18px] rounded-[6px] bg-[#0F70D7] flex items-center justify-center"><svg class="size-3"><use href="#pres"/></svg></div>' : '') +
    '</div><div class="mr-[13px] flex flex-col ' + (i === 1 ? 'pt-[9px]' : '') + '">' +
    '<div class="flex h-[22px] gap-1"><span data-w="' + u[2] + '" class="text-[#06172A]">' + u[1] + '</span>' + (i ? '' : '<span data-w="35" class="italic text-[#06172A]">(شما)</span>') + '</div>' +
    (i === 1 ? '' : '<div class="flex items-center text-[#4E5A66] mt-px"><svg class="w-[10px] h-3 shrink-0"><use href="#lock"/></svg><span data-w="48" class="text-[12.500px] leading-4 -mt-[2px]">قفل شده</span></div>') +
    '</div></div>';
}).join('');

// Fit each label to its column width, again whenever its natural width changes
function fit(inner) {
  var n = inner.offsetWidth;
  if (n) inner.style.transform = 'scaleX(' + inner.parentNode.dataset.w / n + ')';
}
var watcher = new ResizeObserver(function (entries) {
  entries.forEach(function (e) { fit(e.target); });
});
document.querySelectorAll('[data-w]').forEach(function (el) {
  var rtl = !!el.closest('[dir=rtl]');
  var inner = document.createElement('span');
  inner.className = 'inline-block whitespace-nowrap ' + (rtl ? 'origin-right' : 'origin-left');
  while (el.firstChild) inner.appendChild(el.firstChild);
  el.appendChild(inner);
  el.classList.add('block', 'shrink-0', 'whitespace-nowrap');
  el.style.width = el.dataset.w + 'px';
  fit(inner);
  watcher.observe(inner);
});
window.addEventListener('load', function () {
  document.querySelectorAll('[data-w] > span').forEach(fit);
});
</script>
</body>
</html>
